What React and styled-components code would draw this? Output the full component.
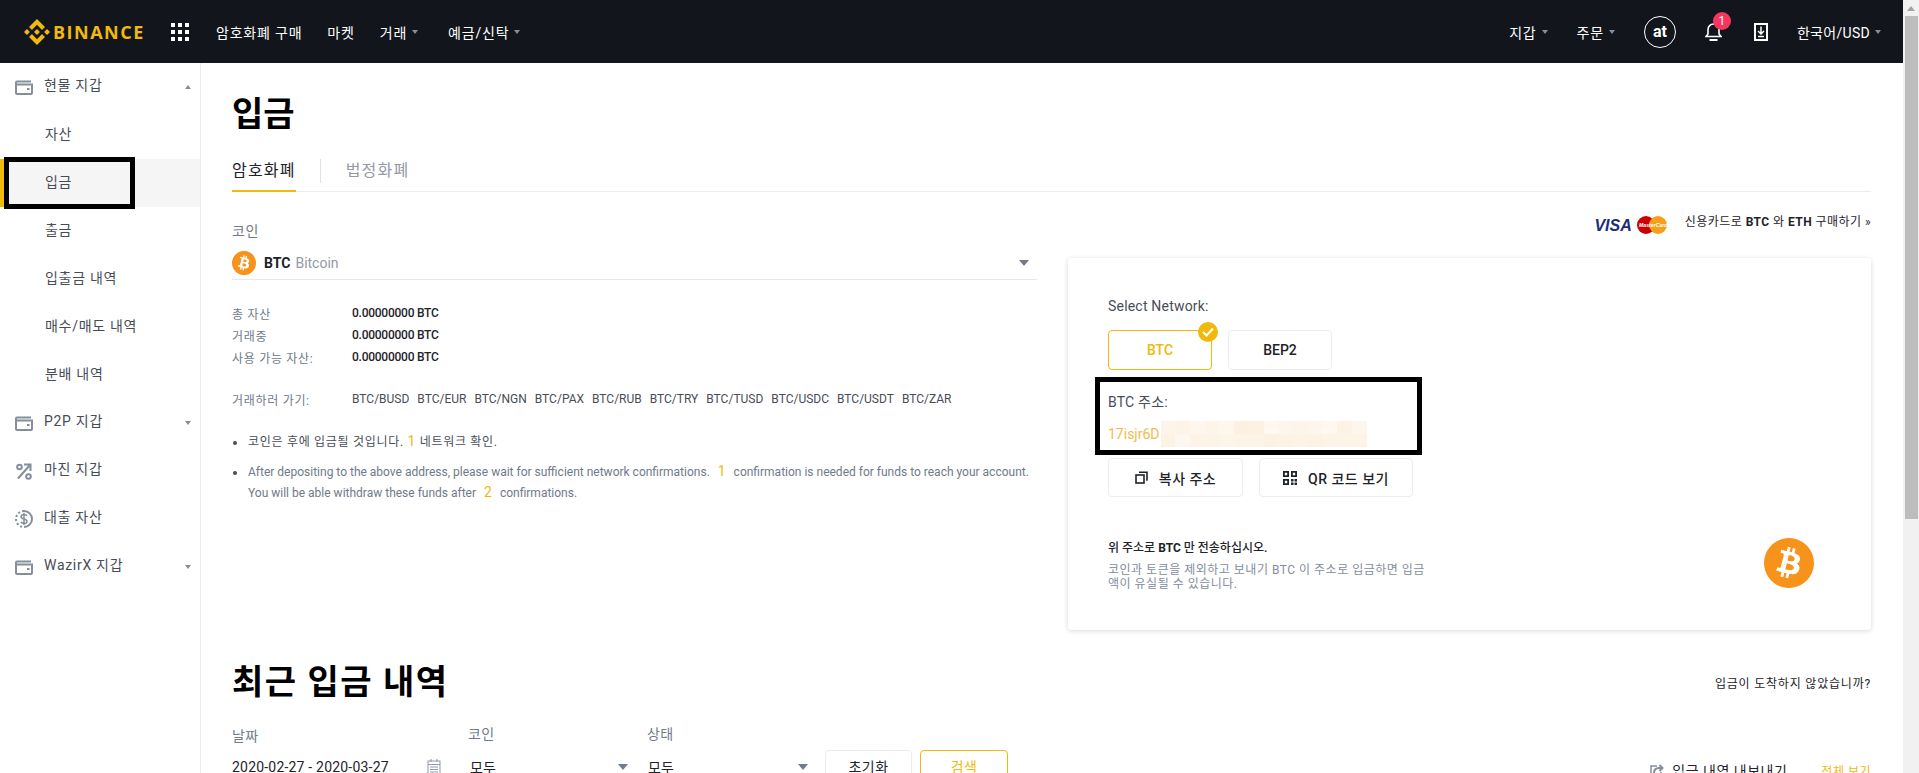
import React from 'react';
import styled, { createGlobalStyle } from 'styled-components';
import { SiBinance, SiBitcoin } from 'react-icons/si';

const GlobalStyle = createGlobalStyle`
  html, body { margin: 0; padding: 0; height: 100%; overflow: hidden; background: #fff; }
  body { font-family: Roboto, "Noto Sans CJK KR", "Noto Sans", sans-serif; color: #1e2329; }
  * { box-sizing: border-box; }
`;

const Shell = styled.div`
  height: 100vh;
  display: flex;
`;

const Page = styled.div`
  flex: 1;
  min-width: 0;
  overflow: hidden;
`;

const ScrollRail = styled.div`
  width: 16px;
  flex: none;
  display: flex;
  flex-direction: column;
  align-items: center;
  background: #f1f1f1;
`;

const ScrollArrow = styled.div`
  height: 16px;
  flex: none;
  display: flex;
  align-items: center;
  justify-content: center;
`;

const ScrollThumb = styled.div`
  width: 13px;
  height: 503px;
  background: #bdbdbd;
`;

const Header = styled.header`
  height: 63px;
  background: #12161c;
  display: flex;
  align-items: center;
  padding: 0 22px 0 24px;
  color: #fff;
  font-size: 14px;
`;

const Logo = styled.div`
  display: flex;
  align-items: center;
  gap: 3px;
  color: #f0b90b;
  width: 147px;
`;

const LogoWord = styled.span`
  font-family: "Open Sans", sans-serif;
  font-weight: 700;
  font-size: 18px;
  letter-spacing: 1.5px;
`;

const NavGroup = styled.nav`
  display: flex;
  align-items: center;
  gap: ${p => p.$gap || 25}px;
  margin-left: ${p => p.$left || 0}px;
`;

const NavItem = styled.span`
  display: inline-flex;
  align-items: center;
  gap: 5px;
  letter-spacing: ${p => p.$tight ? 0.3 : 0.8}px;
  white-space: nowrap;
  color: #fff;
`;

const Spacer = styled.div`
  flex: 1;
`;

const Caret = styled.i`
  display: inline-block;
  width: 0;
  height: 0;
  border-left: ${p => p.$size || 3}px solid transparent;
  border-right: ${p => p.$size || 3}px solid transparent;
  ${p => p.$up ? 'border-bottom' : 'border-top'}: ${p => (p.$size || 3) + 1}px solid #848e9c;
`;

const NavCaret = styled(Caret)`
  margin-right: 5px;
`;

const Avatar = styled.div`
  width: 32px;
  height: 32px;
  border: 1px solid #fff;
  border-radius: 50%;
  display: flex;
  align-items: center;
  justify-content: center;
  font-weight: 700;
  font-size: 16px;
`;

const BellWrap = styled.div`
  position: relative;
  width: 20px;
  height: 24px;
  display: flex;
  align-items: center;
`;

const Badge = styled.span`
  position: absolute;
  top: -8px;
  left: 8px;
  width: 18px;
  height: 18px;
  border-radius: 50%;
  background: #f6365d;
  color: #fff;
  font-size: 12px;
  line-height: 18px;
  text-align: center;
`;

const Body = styled.div`
  display: flex;
  min-height: 1090px;
`;

const Sidebar = styled.aside`
  width: 201px;
  flex: none;
  border-right: 1px solid #eaecef;
`;

const MenuRow = styled.div`
  position: relative;
  height: 48px;
  display: flex;
  align-items: center;
  padding: 0 9px ${p => p.$sub ? 4 : 6}px ${p => p.$sub ? 45 : 14}px;
  font-size: 14px;
  color: #474d57;
  letter-spacing: 0.7px;
  background: ${p => p.$active ? '#f5f5f5' : 'transparent'};
  border-left: ${p => p.$active ? '4px solid #f0b90b' : 'none'};
  ${p => p.$active && 'padding-left: 41px;'}
`;

const MenuIcon = styled.span`
  width: 20px;
  height: 20px;
  margin-right: 10px;
  display: flex;
  align-items: center;
  justify-content: center;
  transform: translateY(3px);
`;

const MenuLabel = styled.span`
  flex: 1;
`;

const MenuCaret = styled(Caret)`
  margin-top: 6px;
`;

const MarkBox = styled.div`
  position: absolute;
  border: ${p => p.$w}px solid #000;
  pointer-events: none;
`;

const SideMark = styled(MarkBox)`
  left: 0;
  top: -2px;
  width: 131px;
  height: 52px;
`;

const Main = styled.main`
  flex: 1;
  min-width: 0;
  padding: 28px 32px 0 31px;
`;

const PageTitle = styled.h1`
  margin: 0;
  font-size: 34px;
  line-height: 46px;
  font-weight: 700;
  color: #000;
`;

const Tabs = styled.div`
  margin-top: 22px;
  height: 33px;
  display: flex;
  align-items: flex-start;
  border-bottom: 1px solid #eaecef;
`;

const Tab = styled.div`
  height: 33px;
  font-size: 16px;
  line-height: 24px;
  letter-spacing: 1.2px;
  color: ${p => p.$active ? '#1e2329' : '#929aa5'};
  border-bottom: ${p => p.$active ? '2px solid #f0b90b' : 'none'};
`;

const TabDivider = styled.div`
  width: 1px;
  height: 24px;
  margin: 0 25px 0 24px;
  background: #dfe2e6;
`;

const Columns = styled.div`
  display: grid;
  grid-template-columns: 805px 803px;
  column-gap: 31px;
`;

const LeftCol = styled.section`
  padding-top: 29px;
`;

const RightCol = styled.section``;

const FieldLabel = styled.div`
  font-size: 14px;
  line-height: 20px;
  letter-spacing: 0.5px;
  color: #707a8a;
`;

const CoinSelect = styled.div`
  margin-top: 10px;
  height: 29px;
  display: flex;
  align-items: center;
  padding-bottom: 4px;
  border-bottom: 1px solid #e6e8ea;
`;

const CoinCode = styled.b`
  margin-left: 8px;
  font-size: 14px;
  font-weight: 700;
  color: #1e2329;
`;

const CoinName = styled.span`
  margin-left: 5px;
  font-size: 14px;
  color: #929aa5;
  flex: 1;
`;

const SelectCaret = styled(Caret)`
  margin-right: 8px;
  border-top-color: #707a8a;
`;

const Balances = styled.div`
  margin-top: 22px;
  display: grid;
  grid-template-columns: 120px 1fr;
  grid-auto-rows: 22px;
  align-items: center;
  font-size: 12px;
`;

const BalanceKey = styled.span`
  color: #707a8a;
  letter-spacing: 0.7px;
`;

const BalanceValue = styled.span`
  font-weight: 500;
  letter-spacing: -0.25px;
  color: #1e2329;
`;

const TradeRow = styled.div`
  margin-top: 20px;
  height: 22px;
  display: grid;
  grid-template-columns: 120px 1fr;
  align-items: center;
  font-size: 12px;
`;

const TradeLinks = styled.div`
  display: flex;
  gap: 8px;
  color: #474d57;
`;

const Notes = styled.ul`
  list-style: none;
  margin: 22px 0 0;
  padding: 0;
  font-size: 12px;
`;

const Note = styled.li`
  position: relative;
  padding-left: 16px;
  margin-bottom: ${p => p.$mb || 0}px;
  line-height: 21px;
  letter-spacing: ${p => p.$dark ? 0.7 : 0}px;
  color: ${p => p.$dark ? '#474d57' : '#707a8a'};
  white-space: nowrap;
  &::before {
    content: '';
    position: absolute;
    left: 1px;
    top: 9px;
    width: 4px;
    height: 4px;
    border-radius: 50%;
    background: #474d57;
  }
`;

const Num = styled.span`
  color: #f0b90b;
  font-size: 14px;
  line-height: 1;
  margin: 0 ${p => p.$gap || 0}px;
`;

const Promo = styled.div`
  height: 66px;
  padding-top: 18px;
  display: flex;
  align-items: flex-start;
  justify-content: flex-end;
  font-size: 12px;
  color: #1e2329;
`;

const Visa = styled.span`
  font-family: "Liberation Sans", sans-serif;
  font-weight: 700;
  font-style: italic;
  font-size: 16px;
  line-height: 20px;
  letter-spacing: 0;
  color: #1a2e78;
  margin-top: 6px;
`;

const MasterMark = styled.svg`
  width: 30px;
  height: 18px;
  margin: 6px 18px 0 5px;
`;

const MasterWord = styled.text`
  font-family: "Liberation Sans", sans-serif;
  font-size: 5.2px;
  font-weight: 700;
  font-style: italic;
  fill: #fff;
`;

const PromoText = styled.span`
  line-height: 24px;
  letter-spacing: 0.45px;
`;

const Card = styled.div`
  position: relative;
  height: 372px;
  padding: 38px 40px 0;
  border-radius: 4px;
  box-shadow: 0 1px 5px rgba(20, 21, 26, 0.16);
`;

const CardLabel = styled.div`
  font-size: 14px;
  line-height: 20px;
  letter-spacing: 0.2px;
  color: #474d57;
`;

const NetworkRow = styled.div`
  margin-top: 14px;
  display: flex;
  gap: 16px;
`;

const NetworkBtn = styled.div`
  position: relative;
  width: 104px;
  height: 40px;
  display: flex;
  align-items: center;
  justify-content: center;
  font-size: 14px;
  font-weight: 500;
  border-radius: 4px;
  border: 1px solid ${p => p.$active ? '#f0b90b' : '#eaecef'};
  color: ${p => p.$active ? '#f0b90b' : '#1e2329'};
`;

const CheckBadge = styled.span`
  position: absolute;
  top: -9px;
  right: -7px;
  width: 20px;
  height: 20px;
  border-radius: 50%;
  background: #f0b90b;
  display: flex;
  align-items: center;
  justify-content: center;
`;

const AddressBlock = styled.div`
  position: relative;
  margin-top: 22px;
  height: 62px;
`;

const AddressMark = styled(MarkBox)`
  left: -13px;
  top: -15px;
  width: 327px;
  height: 78px;
`;

const Address = styled.div`
  margin-top: 9px;
  height: 26px;
  display: flex;
  align-items: center;
  font-size: 14px;
  color: #f3ba4f;
`;

const Mosaic = styled.div`
  margin-left: 1px;
  width: 206px;
  height: 26px;
  display: grid;
  grid-template-columns: repeat(14, 1fr);
  grid-template-rows: repeat(2, 1fr);
`;

const MosaicCell = styled.span`
  background: ${p => p.$c};
`;

const ActionRow = styled.div`
  margin-top: 4px;
  display: flex;
  gap: 16px;
`;

const ActionBtn = styled.div`
  width: ${p => p.$w}px;
  height: 39px;
  display: flex;
  align-items: center;
  justify-content: center;
  gap: 11px;
  font-size: 14px;
  font-weight: 500;
  letter-spacing: 0.5px;
  border: 1px solid #eaecef;
  border-radius: 4px;
  color: #1e2329;
`;

const Warn = styled.div`
  margin-top: 41px;
  display: flex;
  align-items: flex-start;
`;

const WarnText = styled.div`
  width: 326px;
  font-size: 12px;
`;

const WarnTitle = styled.div`
  line-height: 20px;
  font-weight: 500;
  color: #1e2329;
`;

const WarnDesc = styled.div`
  margin-top: 5px;
  line-height: 14px;
  letter-spacing: 0.5px;
  color: #848e9c;
`;

const BigCoin = styled.div`
  margin-left: 330px;
  color: #f7931a;
  display: flex;
`;

const HistoryHead = styled.div`
  margin-top: 32px;
  display: flex;
  align-items: center;
  justify-content: space-between;
`;

const HistoryTitle = styled.h2`
  margin: 0;
  font-size: 34px;
  line-height: 40px;
  font-weight: 700;
  letter-spacing: 1.5px;
  color: #000;
`;

const HelpLink = styled.span`
  font-size: 12px;
  letter-spacing: 0.8px;
  color: #1e2329;
`;

const Filters = styled.div`
  margin-top: 22px;
  display: flex;
  align-items: flex-start;
`;

const FilterField = styled.div`
  width: ${p => p.$w}px;
  padding-top: ${p => p.$top || 0}px;
  flex: none;
`;

const FilterLabel = styled.div`
  font-size: 14px;
  line-height: 20px;
  letter-spacing: 0.4px;
  color: #707a8a;
`;

const FilterValue = styled.div`
  margin-top: ${p => p.$mt || 12}px;
  display: flex;
  align-items: center;
  justify-content: space-between;
  padding: 0 ${p => p.$pr}px 0 ${p => p.$pl || 0}px;
  height: 22px;
  font-size: 14px;
  letter-spacing: 0.2px;
  color: #1e2329;
`;

const FilterBtn = styled.div`
  width: ${p => p.$w}px;
  height: 32px;
  margin: 26px ${p => p.$mr || 0}px 0 0;
  display: flex;
  align-items: center;
  justify-content: center;
  font-size: 14px;
  letter-spacing: 0.4px;
  border-radius: 4px;
  border: 1px solid ${p => p.$primary ? '#f0b90b' : '#eaecef'};
  color: ${p => p.$primary ? '#f0b90b' : '#1e2329'};
`;

const HistoryActions = styled.div`
  margin: 36px 0 0 auto;
  display: flex;
  align-items: center;
  font-size: 14px;
  letter-spacing: 0.5px;
`;

const ExportLink = styled.span`
  display: inline-flex;
  align-items: center;
  gap: 8px;
  color: #1e2329;
  margin-right: 34px;
`;

const ViewAll = styled.span`
  font-size: 12px;
  color: #f0b90b;
`;

const WalletIcon = () => (
  <svg width="18" height="16" viewBox="0 0 18 16" fill="none" stroke="#848e9c" strokeWidth="2">
    <path d="M16 2.500H2A1 1 0 0 0 1 3.500V14a1 1 0 0 0 1 1h14a1 1 0 0 0 1-1V5.500H1" />
    <rect x="12" y="9" width="2.500" height="2" fill="#848e9c" stroke="none" />
  </svg>
);

const PercentIcon = () => (
  <svg width="16" height="17" viewBox="0 0 16 17" fill="none" stroke="#848e9c" strokeWidth="2">
    <circle cx="3.500" cy="4" r="2.300" />
    <circle cx="12.500" cy="13.500" r="2.300" />
    <path d="M2 15.500 14 2M8 1.500h6.500V8" />
  </svg>
);

const LoanIcon = () => (
  <svg width="20" height="20" viewBox="0 0 20 20" fill="none" stroke="#848e9c" strokeWidth="2">
    <path d="M10 2a8 8 0 1 1 0 16" />
    <path d="M10 2a8 8 0 0 0-8 8 8 8 0 0 0 8 8" strokeDasharray="2 2.200" />
    <path d="M13 7c-.5-1-1.600-1.500-3-1.500-1.700 0-3 .8-3 2.200 0 3 6 1.500 6 4.500 0 1.400-1.300 2.300-3 2.300-1.500 0-2.600-.6-3-1.600M10 4v12" strokeWidth="1.500" />
  </svg>
);

const BellIcon = () => (
  <svg width="17" height="19" viewBox="0 0 17 19" fill="none" stroke="#fff" strokeWidth="1.600">
    <path d="M1 14.500h15l-2-2.500V7.500a5.500 5.500 0 0 0-11 0V12z" />
    <path d="M4.500 18h8" strokeWidth="2" />
  </svg>
);

const DownloadIcon = () => (
  <svg width="14" height="18" viewBox="0 0 14 18" fill="none" stroke="#fff">
    <rect x="1" y="1" width="12" height="16" strokeWidth="2" />
    <path d="M7 3.500v7M4 8l3 3 3-3M4 13.500h6" strokeWidth="1.500" />
  </svg>
);

const GridIcon = () => (
  <svg width="18" height="18" viewBox="0 0 18 18" fill="#fff">
    {[0, 7, 14].map(y => [0, 7, 14].map(x => <rect key={`${x}-${y}`} x={x} y={y} width="4" height="4" />))}
  </svg>
);

const CopyIcon = () => (
  <svg width="13" height="13" viewBox="0 0 13 13" fill="none" stroke="#1e2329" strokeWidth="1.600">
    <rect x="1" y="4" width="8" height="8" />
    <path d="M4 1.200h8v8.500" />
  </svg>
);

const QrIcon = () => (
  <svg width="14" height="14" viewBox="0 0 14 14" fill="#1e2329">
    <path d="M0 0h6v6H0zM1.800 1.800v2.400h2.400V1.800zM8 0h6v6H8zm1.800 1.800v2.400h2.400V1.800zM0 8h6v6H0zm1.800 1.800v2.400h2.400V9.800z" fillRule="evenodd" />
    <path d="M8 8h2.500v2.500H8zM11.500 8H14v2.500h-2.500zM8 11.500h2.500V14H8zM11.500 11.500H14V14h-2.500z" />
  </svg>
);

const CalendarIcon = () => (
  <svg width="14" height="16" viewBox="0 0 14 16" fill="none" stroke="#929aa5" strokeWidth="1">
    <rect x="1" y="2" width="12" height="13" />
    <path d="M1 5.500h12M4 0v3M10 0v3M3 8h8M3 10.500h8M3 13h8" />
  </svg>
);

const ExportIcon = () => (
  <svg width="14" height="13" viewBox="0 0 14 13" fill="none" stroke="#848e9c" strokeWidth="2">
    <path d="M7 2H1v10h10V8" strokeWidth="1.500" />
    <path d="M4 9c0-3 2-5 5-5h3M9.500 1l3 3-3 3" />
  </svg>
);

const CheckIcon = () => (
  <svg width="12" height="10" viewBox="0 0 12 10" fill="none" stroke="#fff" strokeWidth="2">
    <path d="M1 5l3.500 3.500L11 1.500" />
  </svg>
);

const ArrowIcon = ({ down }) => (
  <svg width="8" height="5" viewBox="0 0 8 5" fill="#a3a3a3">
    <path d={down ? 'M0 0h8L4 5z' : 'M0 5h8L4 0z'} />
  </svg>
);

const menuItems = [
  { label: '현물 지갑', icon: <WalletIcon />, caret: 'up' },
  { label: '자산', sub: true },
  { label: '입금', sub: true, active: true },
  { label: '출금', sub: true },
  { label: '입출금 내역', sub: true },
  { label: '매수/매도 내역', sub: true },
  { label: '분배 내역', sub: true },
  { label: 'P2P 지갑', icon: <WalletIcon />, caret: 'down' },
  { label: '마진 지갑', icon: <PercentIcon /> },
  { label: '대출 자산', icon: <LoanIcon /> },
  { label: 'WazirX 지갑', icon: <WalletIcon />, caret: 'down' },
];

const markets = ['BUSD', 'EUR', 'NGN', 'PAX', 'RUB', 'TRY', 'TUSD', 'USDC', 'USDT', 'ZAR'];

const mosaicColors = [
  '#fdf5ea', '#fdf4e7', '#fdf7ef', '#fdf5ea', '#fef7ee', '#fcf1e1', '#fcf2e3', '#fef8f1', '#fdf6ec', '#fdf5e9', '#fdf6ec', '#fef8f0', '#fcf3e4', '#fdf6ec',
  '#fdf3e5', '#fef7ef', '#fdf4e7', '#fdf4e8', '#fdf5ea', '#fdf4e7', '#fdf4e7', '#fcf2e3', '#fcf3e5', '#fdf4e7', '#fdf3e5', '#fdf4e7', '#fdf4e8', '#fdf4e7',
];

export default function App() {
  return (
    <Shell>
      <GlobalStyle />
      <Page>
        <Header>
          <Logo>
            <SiBinance size={26} />
            <LogoWord>BINANCE</LogoWord>
          </Logo>
          <GridIcon />
          <NavGroup $left={27}>
            <NavItem>암호화폐 구매</NavItem>
            <NavItem>마켓</NavItem>
            <NavItem>거래 <NavCaret /></NavItem>
            <NavItem>예금/신탁 <NavCaret /></NavItem>
          </NavGroup>
          <Spacer />
          <NavGroup $gap={29}>
            <NavItem>지갑 <Caret /></NavItem>
            <NavItem>주문 <Caret /></NavItem>
            <Avatar>at</Avatar>
            <BellWrap>
              <BellIcon />
              <Badge>1</Badge>
            </BellWrap>
            <DownloadIcon />
            <NavItem $tight>한국어/USD <Caret /></NavItem>
          </NavGroup>
        </Header>
        <Body>
          <Sidebar>
            {menuItems.map(item => (
              <MenuRow key={item.label} $sub={item.sub} $active={item.active}>
                {item.icon && <MenuIcon>{item.icon}</MenuIcon>}
                <MenuLabel>{item.label}</MenuLabel>
                {item.caret && <MenuCaret $up={item.caret === 'up'} />}
                {item.active && <SideMark $w={5} />}
              </MenuRow>
            ))}
          </Sidebar>
          <Main>
            <PageTitle>입금</PageTitle>
            <Tabs>
              <Tab $active>암호화폐</Tab>
              <TabDivider />
              <Tab>법정화폐</Tab>
            </Tabs>
            <Columns>
              <LeftCol>
                <FieldLabel>코인</FieldLabel>
                <CoinSelect>
                  <SiBitcoin size={24} color="#f7931a" />
                  <CoinCode>BTC</CoinCode>
                  <CoinName>Bitcoin</CoinName>
                  <SelectCaret $size={5} />
                </CoinSelect>
                <Balances>
                  <BalanceKey>총 자산</BalanceKey>
                  <BalanceValue>0.00000000 BTC</BalanceValue>
                  <BalanceKey>거래중</BalanceKey>
                  <BalanceValue>0.00000000 BTC</BalanceValue>
                  <BalanceKey>사용 가능 자산:</BalanceKey>
                  <BalanceValue>0.00000000 BTC</BalanceValue>
                </Balances>
                <TradeRow>
                  <BalanceKey>거래하러 가기:</BalanceKey>
                  <TradeLinks>
                    {markets.map(m => <span key={m}>BTC/{m}</span>)}
                  </TradeLinks>
                </TradeRow>
                <Notes>
                  <Note $dark $mb={9}>코인은 후에 입금될 것입니다. <Num>1</Num> 네트워크 확인.</Note>
                  <Note>
                    After depositing to the above address, please wait for sufficient network confirmations. <Num $gap={5}>1</Num> confirmation is needed for funds to reach your account.
                    <br />
                    You will be able withdraw these funds after <Num $gap={5}>2</Num> confirmations.
                  </Note>
                </Notes>
              </LeftCol>
              <RightCol>
                <Promo>
                  <Visa>VISA</Visa>
                  <MasterMark viewBox="0 0 30 18">
                    <circle cx="9" cy="9" r="9" fill="#cc0000" />
                    <circle cx="21" cy="9" r="9" fill="#f79e1b" />
                    <MasterWord x="2" y="11">MasterCard</MasterWord>
                  </MasterMark>
                  <PromoText>신용카드로 <b>BTC</b> 와 <b>ETH</b> 구매하기 »</PromoText>
                </Promo>
                <Card>
                  <CardLabel>Select Network:</CardLabel>
                  <NetworkRow>
                    <NetworkBtn $active>
                      BTC
                      <CheckBadge><CheckIcon /></CheckBadge>
                    </NetworkBtn>
                    <NetworkBtn>BEP2</NetworkBtn>
                  </NetworkRow>
                  <AddressBlock>
                    <CardLabel>BTC 주소:</CardLabel>
                    <Address>
                      17isjr6D
                      <Mosaic>
                        {mosaicColors.map((c, i) => <MosaicCell key={i} $c={c} />)}
                      </Mosaic>
                    </Address>
                    <AddressMark $w={5} />
                  </AddressBlock>
                  <ActionRow>
                    <ActionBtn $w={135}><CopyIcon />복사 주소</ActionBtn>
                    <ActionBtn $w={154}><QrIcon />QR 코드 보기</ActionBtn>
                  </ActionRow>
                  <Warn>
                    <WarnText>
                      <WarnTitle>위 주소로 <b>BTC</b> 만 전송하십시오.</WarnTitle>
                      <WarnDesc>코인과 토큰을 제외하고 보내기 BTC 이 주소로 입금하면 입금액이 유실될 수 있습니다.</WarnDesc>
                    </WarnText>
                    <BigCoin><SiBitcoin size={50} /></BigCoin>
                  </Warn>
                </Card>
              </RightCol>
            </Columns>
            <HistoryHead>
              <HistoryTitle>최근 입금 내역</HistoryTitle>
              <HelpLink>입금이 도착하지 않았습니까?</HelpLink>
            </HistoryHead>
            <Filters>
              <FilterField $w={236} $top={2}>
                <FilterLabel>날짜</FilterLabel>
                <FilterValue $mt={10} $pr={27}>2020-02-27 - 2020-03-27 <CalendarIcon /></FilterValue>
              </FilterField>
              <FilterField $w={179}>
                <FilterLabel>코인</FilterLabel>
                <FilterValue $pl={2} $pr={11}>모두 <SelectCaret $size={5} /></FilterValue>
              </FilterField>
              <FilterField $w={178}>
                <FilterLabel>상태</FilterLabel>
                <FilterValue $pl={1} $pr={9}>모두 <SelectCaret $size={5} /></FilterValue>
              </FilterField>
              <FilterBtn $w={87} $mr={8}>초기화</FilterBtn>
              <FilterBtn $w={88} $primary>검색</FilterBtn>
              <HistoryActions>
                <ExportLink><ExportIcon />입금 내역 내보내기</ExportLink>
                <ViewAll>전체 보기</ViewAll>
              </HistoryActions>
            </Filters>
          </Main>
        </Body>
      </Page>
      <ScrollRail>
        <ScrollArrow><ArrowIcon /></ScrollArrow>
        <ScrollThumb />
      </ScrollRail>
    </Shell>
  );
}
